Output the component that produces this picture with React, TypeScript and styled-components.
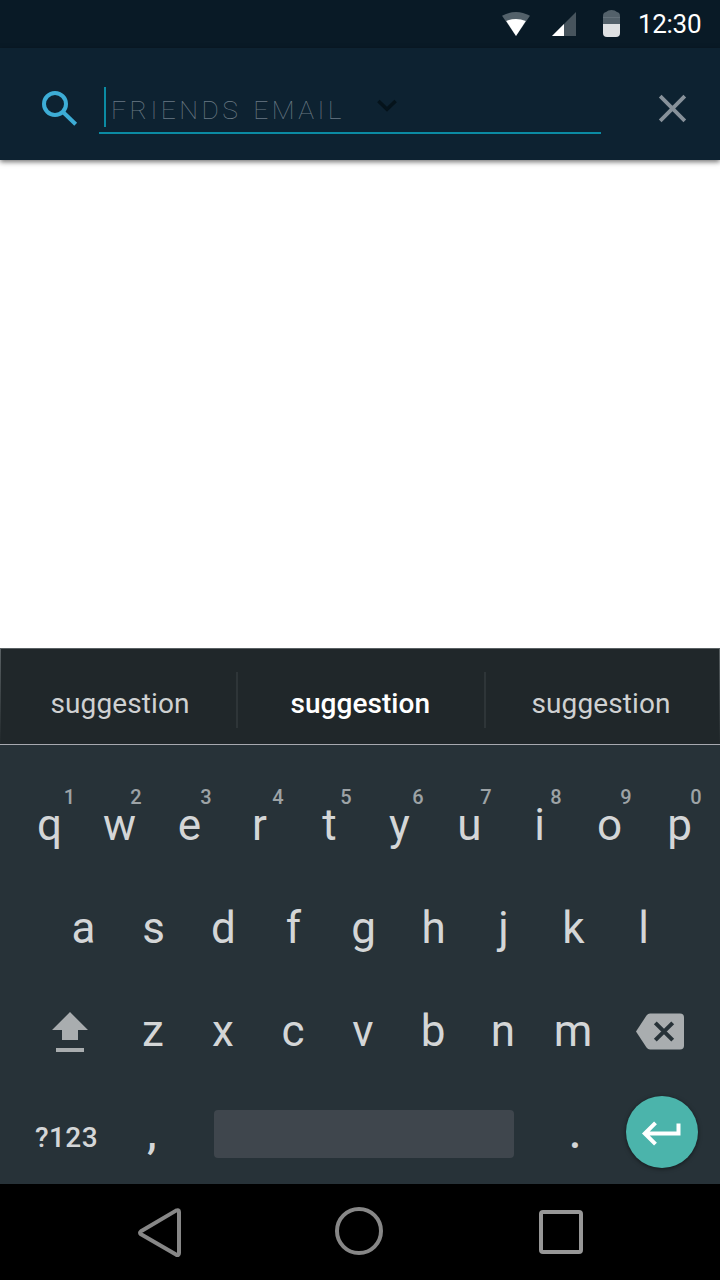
import React from "react";
import styled, { createGlobalStyle } from "styled-components";

const GlobalStyle = createGlobalStyle`
  * { box-sizing: border-box; }
  body { margin: 0; background: #fff; font-family: Roboto, "Liberation Sans", sans-serif; }
  svg { display: block; flex: none; }
`;

const Screen = styled.div`
  width: 720px;
  height: 1280px;
  display: flex;
  flex-direction: column;
  overflow: hidden;
  background: #fff;
`;

const StatusBar = styled.header`
  height: 48px;
  flex: none;
  display: flex;
  justify-content: flex-end;
  padding-right: 18px;
  background: #091a26;
`;

const Clock = styled.time`
  width: 64px;
  margin-left: 13px;
  font-size: 26px;
  line-height: 48px;
  letter-spacing: -0.3px;
  color: #fff;
  white-space: nowrap;
`;

const SearchBar = styled.div`
  height: 112px;
  flex: none;
  display: flex;
  padding-left: 40px;
  background: #0d2231;
  box-shadow: 0 2px 5px rgba(0, 0, 0, 0.55);
`;

const Field = styled.div`
  width: 502px;
  height: 86px;
  margin-left: 19px;
  padding: 39px 0 0 5px;
  display: flex;
  border-bottom: 2px solid #0b8ba3;
`;

const Caret = styled.span`
  width: 2px;
  height: 40px;
  margin-right: 5px;
  background: #0b8ba3;
`;

const Placeholder = styled.span`
  width: 264px;
  font-size: 26.5px;
  font-weight: 100;
  line-height: 45px;
  letter-spacing: 3.45px;
  word-spacing: 2px;
  color: #6b7a84;
  white-space: nowrap;
`;

const Results = styled.main`
  flex: 1;
`;

const Suggestions = styled.div`
  height: 97px;
  flex: none;
  display: grid;
  grid-template-columns: 236px 2px 246px 2px 234px;
  align-items: center;
  border: solid #596063;
  border-width: 1px 0;
  border-bottom-color: #a7a9b0;
  background:
    linear-gradient(#596063, #20272a) left / 1px 100% no-repeat,
    linear-gradient(#596063, #20272a) right / 1px 100% no-repeat,
    #20272a;
`;

const Suggestion = styled.span<{ $primary?: boolean; $indent: number }>`
  padding: 14px 0 0 ${(p) => p.$indent}px;
  font-size: 28px;
  line-height: 34px;
  letter-spacing: ${(p) => (p.$primary ? 0.05 : 0.1)}px;
  font-weight: ${(p) => (p.$primary ? 500 : 400)};
  color: ${(p) => (p.$primary ? "#fff" : "#cfd1d2")};
`;

const Divider = styled.i`
  height: 56px;
  margin-top: 7px;
  background: #2e3538;
`;

const Keyboard = styled.section`
  height: 439px;
  flex: none;
  padding-top: 28px;
  background: #273238;
`;

const KeyRow = styled.div<{ $indent: number; $height: number }>`
  display: flex;
  align-items: center;
  height: ${(p) => p.$height}px;
  padding-left: ${(p) => p.$indent}px;
`;

const Key = styled.span`
  position: relative;
  width: 70px;
  text-align: center;
  font-size: 44px;
  line-height: 60px;
  color: #d4d6d7;
`;

const Hint = styled.sup<{ $shift: number }>`
  position: absolute;
  left: ${(p) => 35.5 + p.$shift}px;
  top: -8px;
  width: 14px;
  margin-left: -7px;
  font-size: 20px;
  font-weight: 500;
  line-height: 20px;
  color: #9da3a6;
`;

const BottomRow = styled.div`
  height: 101px;
  display: grid;
  grid-template-columns: 133px 38px 43px 300px 10px 102px 72px;
`;

const SymbolKey = styled.span`
  padding-top: 38px;
  text-align: center;
  font-size: 28px;
  line-height: 34px;
  letter-spacing: 0.4px;
  font-weight: 500;
  color: #d4d6d7;
`;

const Punctuation = styled.span`
  padding-top: 20px;
  text-align: center;
  font-size: 44px;
  line-height: 60px;
  font-weight: 500;
  color: #d4d6d7;
`;

const SpaceKey = styled.span`
  grid-column: 4;
  height: 48px;
  margin-top: 27px;
  border-radius: 4px;
  background: #3f464d;
`;

const EnterKey = styled.span`
  width: 72px;
  height: 72px;
  margin-top: 13px;
  border-radius: 50%;
  background: #4bb4ab;
  box-shadow: 0 1px 4px rgba(0, 0, 0, 0.5);
`;

const PeriodKey = styled(Punctuation)`
  grid-column: 6;
`;

const NavBar = styled.nav`
  height: 96px;
  flex: none;
  display: flex;
  align-items: center;
  padding-left: 130px;
  gap: 140px;
  background: #000;
`;

const topRow: [string, string, number][] = [
  ["q", "1", 19.5], ["w", "2", 16], ["e", "3", 16], ["r", "4", 18], ["t", "5", 16],
  ["y", "6", 18], ["u", "7", 16], ["i", "8", 16], ["o", "9", 16], ["p", "0", 16],
];

const StatusIcons = () => (
  <svg width="130" height="48" viewBox="495 0 130 48">
    <path d="M502 15.8Q516 8.2 530 15.8L516 36Z" fill="#53616a" />
    <path d="M506.2 21Q516 17 525.8 21L516 36Z" fill="#fff" />
    <path d="M576 12V36H552Z" fill="#47545d" />
    <path d="M564 24V36H552Z" fill="#fff" />
    <path d="M603 24V16Q603 12.5 606 12Q608 10 611.5 10Q615 10 617 12Q620 12.5 620 16V24Z" fill="#53616a" />
    <path d="M603 17.5H620" stroke="#64717a" strokeWidth="1" />
    <path d="M603 24H620V33Q620 37 616 37H607Q603 37 603 33Z" fill="#dfe1e3" />
  </svg>
);

export default function App() {
  return (
    <>
      <GlobalStyle />
      <Screen>
        <StatusBar>
          <StatusIcons />
          <Clock>12:30</Clock>
        </StatusBar>
        <SearchBar>
          <svg width="40" height="112" viewBox="40 48 40 112" fill="none" stroke="#3dadd6" strokeWidth="4">
            <circle cx="55" cy="104" r="11" />
            <path d="M63.5 112.5L75.7 124.2" />
          </svg>
          <Field>
            <Caret />
            <Placeholder>FRIENDS EMAIL</Placeholder>
            <svg width="24" height="40" viewBox="375 87 24 40" fill="none" stroke="#05131b" strokeWidth="3.6">
              <path d="M378.4 101L387 109.3L395.6 101" />
            </svg>
          </Field>
          <svg width="119" height="112" viewBox="601 48 119 112" fill="none" stroke="#87919a" strokeWidth="3.8">
            <path d="M660.2 96.2L684.8 120.8M684.8 96.2L660.2 120.8" />
          </svg>
        </SearchBar>
        <Results />
        <Suggestions>
          <Suggestion $indent={50.5}>suggestion</Suggestion>
          <Divider />
          <Suggestion $indent={52.5} $primary>suggestion</Suggestion>
          <Divider />
          <Suggestion $indent={45.5}>suggestion</Suggestion>
        </Suggestions>
        <Keyboard>
          <KeyRow $indent={14.5} $height={104}>
            {topRow.map(([letter, digit, shift]) => (
              <Key key={letter}>
                {letter}
                <Hint $shift={shift}>{digit}</Hint>
              </Key>
            ))}
          </KeyRow>
          <KeyRow $indent={48.5} $height={102}>
            {"asdfghjkl".split("").map((c) => <Key key={c}>{c}</Key>)}
          </KeyRow>
          <KeyRow $indent={48} $height={104}>
            <svg width="70" height="60" viewBox="48 1001 70 60" fill="#a9adaf">
              <path d="M70 1012L88 1030H78V1040H62V1030H52ZM56 1048H84V1052H56Z" />
            </svg>
            {"zxcvbnm".split("").map((c) => <Key key={c}>{c}</Key>)}
            <svg width="80" height="60" viewBox="608 1001 80 60">
              <path d="M636 1031.5L646.5 1015.5Q648 1013.5 650 1013.5H680Q684 1013.5 684 1017.5V1045.5Q684 1049.5 680 1049.5H650Q648 1049.5 646.5 1047.5Z" fill="#a9adaf" />
              <path d="M655.3 1022.8L672.7 1040.2M672.7 1022.8L655.3 1040.2" stroke="#273238" strokeWidth="4" />
            </svg>
          </KeyRow>
          <BottomRow>
            <SymbolKey>?123</SymbolKey>
            <Punctuation>,</Punctuation>
            <SpaceKey />
            <PeriodKey>.</PeriodKey>
            <EnterKey>
              <svg width="72" height="72" viewBox="626 1096 72 72" fill="none" stroke="#fff" strokeWidth="4">
                <path d="M678.5 1123.5V1133.5H645M655.5 1122.8L644.8 1133.5L655.5 1144.2" />
              </svg>
            </EnterKey>
          </BottomRow>
        </Keyboard>
        <NavBar>
          <svg width="60" height="96" viewBox="130 1184 60 96" fill="none" stroke="#878787" strokeWidth="4" strokeLinejoin="round">
            <path d="M141 1231.3L176 1210.6Q179 1209.2 179 1212V1253Q179 1256 176 1254.6L141 1234.3Q139 1232.8 141 1231.3Z" />
          </svg>
          <svg width="60" height="96" viewBox="330 1184 60 96" fill="none" stroke="#878787" strokeWidth="4">
            <circle cx="359" cy="1231" r="22" />
          </svg>
          <svg width="60" height="96" viewBox="530 1184 60 96" fill="none" stroke="#979797" strokeWidth="4">
            <rect x="541" y="1212" width="40" height="40" rx="2" />
          </svg>
        </NavBar>
      </Screen>
    </>
  );
}
